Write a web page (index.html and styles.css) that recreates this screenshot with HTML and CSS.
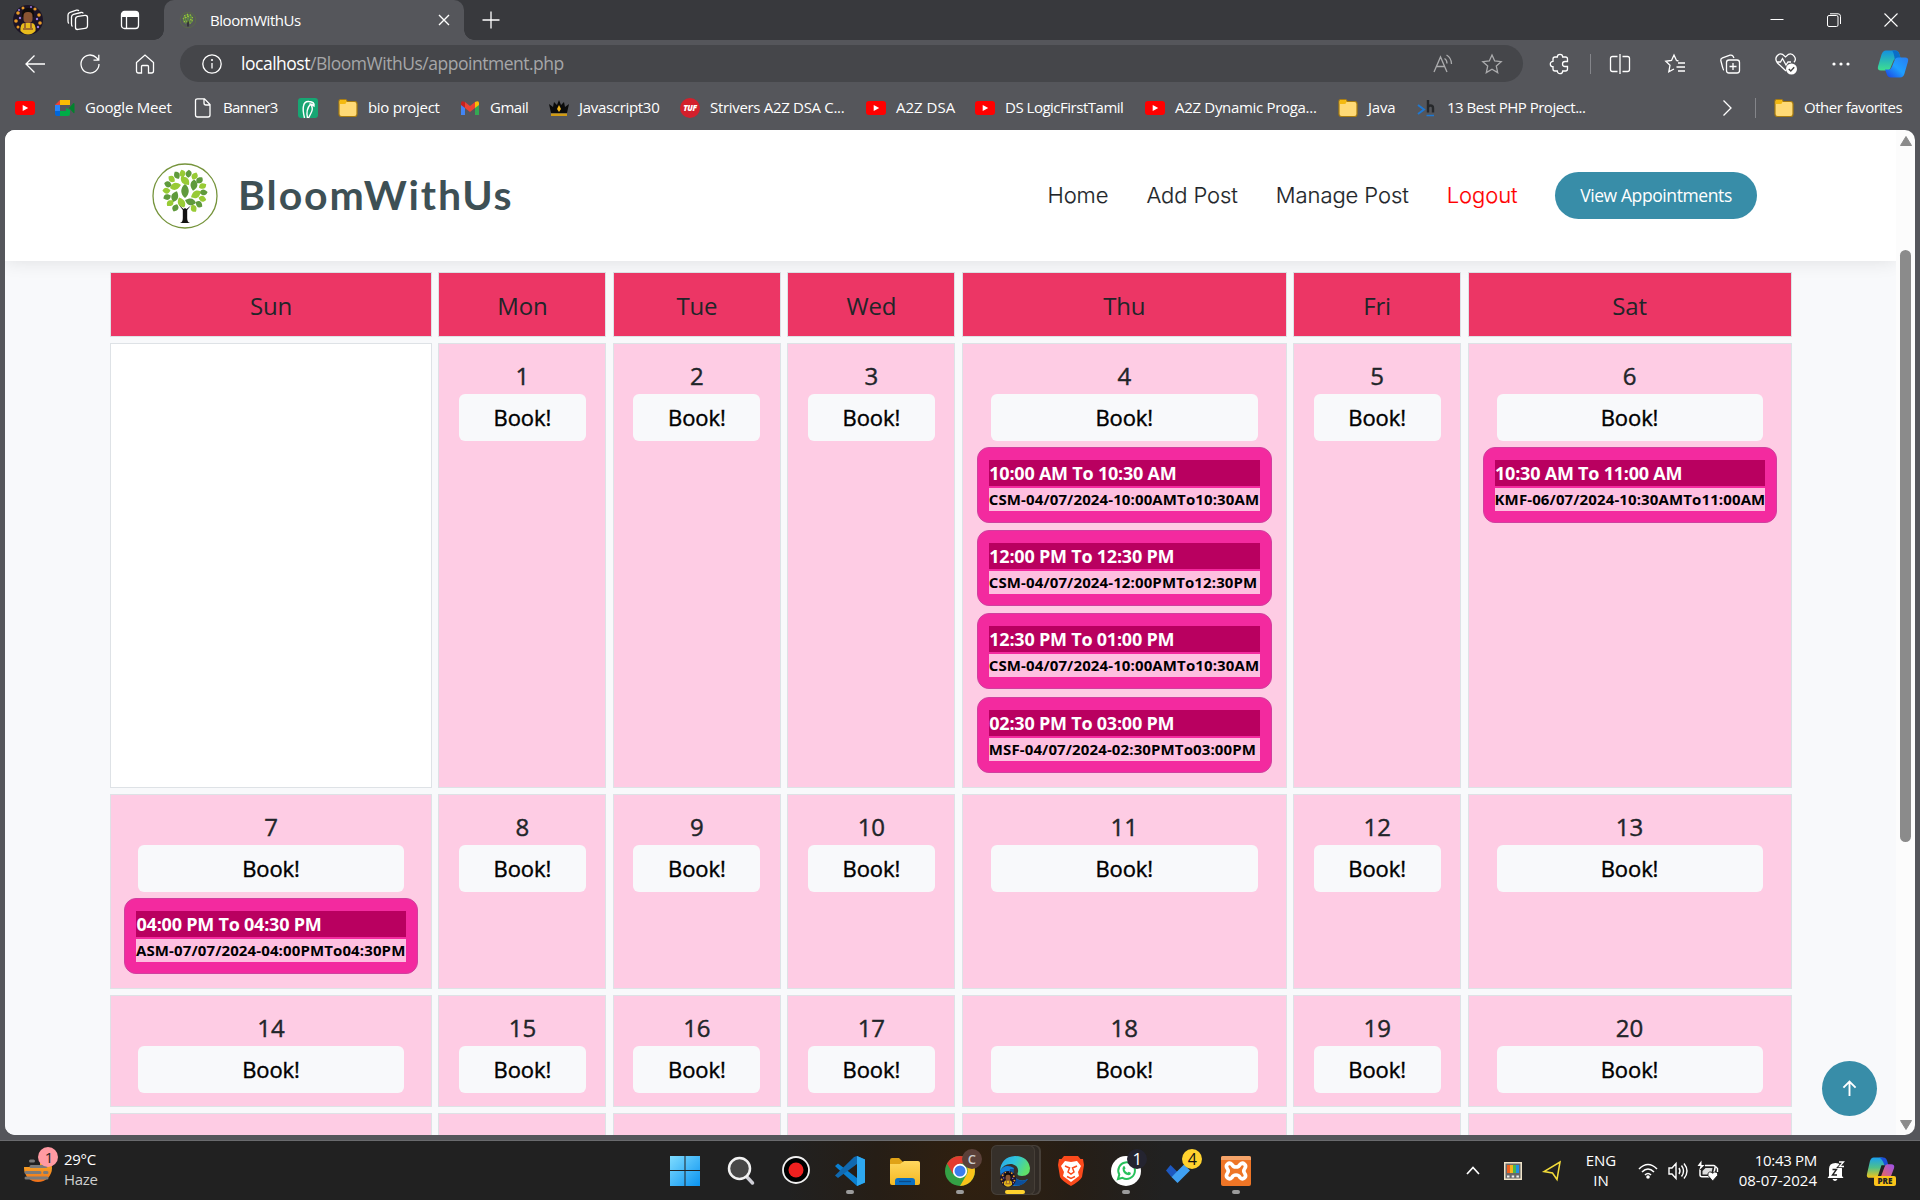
FILE: index.html
```html
<!DOCTYPE html>
<html lang="en">
<head>
<meta charset="utf-8">
<title>BloomWithUs</title>
<link rel="stylesheet" href="styles.css">
</head>
<body>
<svg class="defs" aria-hidden="true">
  <defs>
    <linearGradient id="gBlue" x1="0" y1="0" x2="1" y2="1"><stop offset="0" stop-color="#7fdcff"/><stop offset="1" stop-color="#0a93f0"/></linearGradient>
    <linearGradient id="gFolder" x1="0" y1="0" x2="0" y2="1"><stop offset="0" stop-color="#ffd75e"/><stop offset="1" stop-color="#f5b822"/></linearGradient>
    <linearGradient id="gTeal" x1="0" y1="0" x2="0" y2="1"><stop offset="0" stop-color="#1390e0"/><stop offset="1" stop-color="#3fe08e"/></linearGradient>
    <linearGradient id="gSky" x1="0" y1="1" x2="1" y2="0"><stop offset="0" stop-color="#1b3fe0"/><stop offset=".5" stop-color="#1fa0ff"/><stop offset="1" stop-color="#2a7cf0"/></linearGradient>
    <linearGradient id="gEdge" x1="0" y1="0" x2="1" y2=".4"><stop offset="0" stop-color="#2ba4ea"/><stop offset=".5" stop-color="#2fc4dc"/><stop offset="1" stop-color="#5fe06a"/></linearGradient>
    <linearGradient id="gSun" x1="0" y1="0" x2="0" y2="1"><stop offset="0" stop-color="#fcc42c"/><stop offset="1" stop-color="#f0701a"/></linearGradient>
    <linearGradient id="gPre" x1="0" y1="0" x2="0" y2="1"><stop offset="0" stop-color="#1aa0f0"/><stop offset=".5" stop-color="#4fc08a"/><stop offset="1" stop-color="#f5c518"/></linearGradient>
    <linearGradient id="gPink" x1="0" y1="1" x2="1" y2="0"><stop offset="0" stop-color="#f06a50"/><stop offset="1" stop-color="#9a50f0"/></linearGradient>
    <path id="leafA" d="M33 21c5 4 5 10 0 14c-5-4-5-10 0-14z"/>
    <path id="leafB" d="M29 14c6-1 9 2 8 8c-6 0-9-3-8-8z"/>
    <path id="leafC" d="M35 6.500c4 2 4 5 0 8c-4-2-4-5 0-8z"/>
    <symbol id="tree" viewBox="0 0 66 66">
      <circle cx="33" cy="33" r="32" fill="#fff" stroke="#76943c" stroke-width="1.300"/>
      <g id="crown">
        <g fill="#5f9a3c">
          <use href="#leafA"/><use href="#leafB" transform="rotate(52 33 29)"/><use href="#leafB" transform="rotate(150 33 29)"/><use href="#leafB" transform="rotate(245 33 29)"/>
          <use href="#leafC" transform="rotate(5 33 29)"/><use href="#leafC" transform="rotate(45 33 29)"/><use href="#leafC" transform="rotate(85 33 29)"/><use href="#leafC" transform="rotate(125 33 29)"/><use href="#leafC" transform="rotate(205 33 29)"/><use href="#leafC" transform="rotate(248 33 29)"/><use href="#leafC" transform="rotate(288 33 29)"/><use href="#leafC" transform="rotate(328 33 29)"/>
        </g>
        <g fill="#98cb35">
          <use href="#leafB" transform="rotate(0 33 29)"/><use href="#leafB" transform="rotate(102 33 29)"/><use href="#leafB" transform="rotate(198 33 29)"/><use href="#leafB" transform="rotate(300 33 29)"/>
          <use href="#leafC" transform="rotate(25 33 29)"/><use href="#leafC" transform="rotate(65 33 29)"/><use href="#leafC" transform="rotate(105 33 29)"/><use href="#leafC" transform="rotate(146 33 29)"/><use href="#leafC" transform="rotate(227 33 29)"/><use href="#leafC" transform="rotate(268 33 29)"/><use href="#leafC" transform="rotate(308 33 29)"/><use href="#leafC" transform="rotate(346 33 29)"/>
        </g>
      </g>
      <path d="M27 42l3.800 5v8c0 3-.8 4.500-3 5h10.400c-2.200-.5-3-2-3-5v-8L39 42.500l-4.500 3.500L33 45l-1.500 1z" fill="#111"/>
    </symbol>
    <symbol id="yt" viewBox="0 0 20 20"><rect y="3" width="20" height="14" rx="3" fill="#f00"/><path d="M7.700 7v6l5.500-3z" fill="#fff"/></symbol>
    <symbol id="folder" viewBox="0 0 20 20"><path d="M1 3.500Q1 1.500 3 1.500h4q2 0 2 2h7.500q2.500 0 2.500 2.500V16q0 2.500-2.500 2.500h-13Q1 18.500 1 16z" fill="#ffda76" stroke="#a87c10" stroke-width="1.200"/><path d="M1.600 3.500q0-1.400 1.400-1.400h4q1.400 0 1.400 1.600q0 2.300-2 2.300H1.600z" fill="#f4b90f"/></symbol>
    <symbol id="avatar" viewBox="0 0 30 30">
      <circle cx="15" cy="15" r="15" fill="#1c1426"/>
      <g fill="#e89a28"><circle cx="5" cy="8" r="1.800"/><circle cx="10" cy="3" r="1.500"/><circle cx="22" cy="4" r="1.600"/><circle cx="26" cy="10" r="1.800"/><circle cx="3" cy="16" r="1.800"/><circle cx="27" cy="18" r="1.800"/><circle cx="5" cy="22" r="1.500"/></g>
      <g fill="#9a7be0"><circle cx="7" cy="13" r="1.200"/><circle cx="24" cy="14" r="1.200"/><circle cx="18" cy="2" r="1"/><circle cx="6" cy="5" r="1"/><circle cx="25" cy="22" r="1.200"/></g>
      <path d="M9 9q0-6 6-6t6 6v3H9z" fill="#110d0b"/><rect x="10.500" y="7" width="9" height="11" rx="4" fill="#8a5432"/><path d="M7.500 26q-.5-8 4-8h7q4.500 0 4 8q-3.500 3.500-7.500 3.500t-7.500-3.500z" fill="#e8bc1c"/><path d="M10 24h10M12 18v5M18 18v5" stroke="#8a5432" stroke-width="1.600"/>
    </symbol>
  </defs>
</svg>

<div class="browser">
  <div class="tabstrip">
    <div class="strip-icons">
      <svg class="i30"><use href="#avatar"/></svg>
      <svg class="i22" viewBox="0 0 22 22"><g class="ln"><rect x="8.500" y="7" width="12" height="13" rx="2.500" transform="skewY(-8) translate(0 2)"/><path d="M5.500 17.500Q4.500 17 4.500 15V8q0-2 2-2.700L14 3.500q2-.3 2 1"/><path d="M2 14.500Q1 14 1 12V6q0-2 2-2.700L9.500 1.200q2-.4 2.300.8"/></g></svg>
      <svg class="i20" viewBox="0 0 20 20"><rect x="1.500" y="1.500" width="17" height="17" rx="3" class="ln"/><path d="M1.500 7V4.500q0-3 3-3h11q3 0 3 3V7z" fill="#fff"/><path d="M6.500 7v11" class="ln"/></svg>
    </div>
    <div class="tab">
      <svg class="i16" viewBox="0 0 66 66"><circle cx="33" cy="33" r="32" fill="none" stroke="#5d7a33" stroke-width="2"/><use href="#crown"/><path d="M33 38v22" stroke="#222" stroke-width="5"/></svg>
      <span class="tab-title">BloomWithUs</span>
      <svg class="i12" viewBox="0 0 12 12"><path d="M1 1l10 10M11 1L1 11" stroke="#fff" stroke-width="1.400"/></svg>
    </div>
    <svg class="i18 newtab" viewBox="0 0 18 18"><path d="M9 .5v17M.5 9h17" stroke="#fff" stroke-width="1.300"/></svg>
    <div class="wincontrols">
      <svg class="i14" viewBox="0 0 14 14"><path d="M.5 6.500h13" stroke="#fff"/></svg>
      <svg class="i14" viewBox="0 0 14 14"><rect x=".5" y="2.500" width="10.500" height="11" rx="1.500" class="ln1"/><path d="M3 .8h8q2.500 0 2.500 2.500V11" class="ln1"/></svg>
      <svg class="i14" viewBox="0 0 14 14"><path d="M.5.5l13 13M13.500.5l-13 13" stroke="#fff" stroke-width="1.100"/></svg>
    </div>
  </div>

  <div class="toolbar">
    <div class="nav-icons">
      <svg class="i20" viewBox="0 0 20 20"><path d="M20 10H1M9.500 1.500L1 10l8.500 8.500" class="ln"/></svg>
      <svg class="i20" viewBox="0 0 20 20"><path d="M19 10a9 9 0 1 1-2.500-6.200L18.500 6M18.800.8V6.200H13.500" class="ln"/></svg>
      <svg class="i20" viewBox="0 0 20 20"><path d="M1.500 8.500L10 1l8.500 7.500V17q0 2-2 2h-3v-6.500q0-1-1-1h-5q-1 0-1 1V19h-3q-2 0-2-2z" class="ln"/></svg>
    </div>
    <div class="address">
      <svg class="i20" viewBox="0 0 20 20"><circle cx="10" cy="10" r="9.200" class="ln"/><path d="M10 9v5.500" class="ln"/><circle cx="10" cy="6" r="1.100" fill="#fff"/></svg>
      <span class="url"><b>localhost</b>/BloomWithUs/appointment.php</span>
      <svg class="i20 dim" viewBox="0 0 20 20"><path d="M1 18L7.500 3L14 18M3.500 12.500h8M11.500 4.500q2.500 1.500 2.500 5M13.500 1q5 3 5 9" class="ln"/></svg>
      <svg class="i20 dim" viewBox="0 0 20 20"><path d="M10 1l2.700 6 6.500.7-4.900 4.400 1.400 6.500L10 15.300 4.300 18.600l1.400-6.500L.8 7.700 7.300 7z" class="ln"/></svg>
    </div>
    <div class="ext-icons">
      <svg class="i20" viewBox="0 0 20 20"><path d="M5 3H7.300a2.700 2.700 0 0 1 5.400 0H15.500q2 0 2 2V7.500H15a2.500 2.500 0 0 0 0 5h2.500V15q0 2-2 2H12.700a2.700 2.700 0 0 1-5.400 0H5q-2 0-2-2V12.700a2.700 2.700 0 0 1 0-5.400V5q0-2 2-2z" class="ln"/></svg>
      <i class="vline"></i>
      <svg class="i20" viewBox="0 0 20 20"><path d="M10 0v20M7.500 2.500h-5q-2 0-2 2v11q0 2 2 2h5M12.500 2.500h5q2 0 2 2v11q0 2-2 2h-5" class="ln"/></svg>
      <svg class="i20" viewBox="0 0 20 20"><path d="M11.500 6.500L9 1 6.500 6.500.8 7.300l4.200 4-1.200 6.500L9 15M13 9h7M11.500 13h8.500M13 17h7M11.500 6.500l2 .3" class="ln"/></svg>
      <svg class="i20" viewBox="0 0 20 20"><path d="M4 16Q3.300 16 2.500 13L.8 6.500Q.5 4.500 2.500 3.800L10 1.200q2-.4 3 1L14 4" class="ln"/><rect x="6.500" y="6" width="13" height="13" rx="2.500" class="ln"/><path d="M13 9v7M9.500 12.500h7" class="ln"/></svg>
      <svg class="i22" viewBox="0 0 22 22"><path d="M11 18L2.500 10Q-.5 6 2 3t5.500-1.700L10.500 4l3-2.700Q17 0 19.300 3.300t-.3 6M1.500 9h4l2-3.500L11 12l2-3h3" class="ln"/><circle cx="16.500" cy="16" r="5.500" fill="#fff"/><path d="M13.800 16l2 2 3.400-3.800" stroke="#444" stroke-width="1.400" fill="none"/></svg>
      <svg class="i20" viewBox="0 0 20 20"><g fill="#fff"><circle cx="3" cy="10" r="1.600"/><circle cx="10" cy="10" r="1.600"/><circle cx="17" cy="10" r="1.600"/></g></svg>
      <svg class="i30" viewBox="0 0 30 27"><path d="M8 0h9q3.500 0 4.500 4l1.500 5H16L13 16q-1 4-4 4H3q-4 0-3-4L3.500 4Q5 0 8 0z" fill="url(#gTeal)"/><path d="M14 0h3q3.500 0 4.500 4l1.300 4h-3.500q-2 0-2.500 1.500Q16 2 14 0z" fill="#0a6ec8"/><path d="M22 27h-9q-3.500 0-4.500-4L7 19h4q2 0 3-3l2.500-6Q17.500 7 20 7h7q4 0 3 4l-3.500 12Q25.500 27 22 27z" fill="url(#gSky)"/></svg>
    </div>
  </div>

  <div class="bookmarks">
    <div class="bm"><svg class="i20"><use href="#yt"/></svg></div>
    <div class="bm t1"><svg class="i20" viewBox="0 0 20 20"><path d="M5 2h10v5H5z" fill="#fbbc04"/><path d="M5 2v5H0z" fill="#ea4335"/><path d="M0 7h5v6H0z" fill="#2684fc"/><path d="M0 13h5v5H2q-2 0-2-2z" fill="#0066da"/><path d="M5 13h6v-3l4 2v4q0 2-2 2H5z" fill="#00ac47"/><path d="M14 10l4.500-5q1 0 1 1v8.500q0 1-1 .5z" fill="#00832d"/></svg><span>Google Meet</span></div>
    <div class="bm t4"><svg class="i20" viewBox="0 0 20 20"><path d="M4.500.8h7L17 6.500V17q0 2-2 2H4.500q-2 0-2-2V2.800q0-2 2-2zM11 1v4q0 2 2 2h4" class="ln"/></svg><span>Banner3</span></div>
    <div class="bm"><svg class="i20" viewBox="0 0 20 20"><rect width="20" height="20" rx="3" fill="#17a673"/><path d="M6.500 20Q4.500 12 5.500 8Q6.500 3 11 3.500q6 .5 5 4.500q-2-2-3.500-2q3 4 1 8t-3 6M9.500 20q-2-8 3-14" fill="none" stroke="#fff" stroke-width="1.400"/></svg></div>
    <div class="bm t2"><svg class="i20"><use href="#folder"/></svg><span>bio project</span></div>
    <div class="bm t3"><svg class="i20" viewBox="0 0 20 20"><path d="M1 5v12h4V8z" fill="#4285f4"/><path d="M19 5v12h-4V8z" fill="#34a853"/><path d="M5 4v6l5 4 5-4V4l-5 4z" fill="#ea4335"/><path d="M1 5q0-3 4-1v6L1 7z" fill="#c5221f"/><path d="M19 5q0-3-4-1v6l4-3z" fill="#fbbc04"/></svg><span>Gmail</span></div>
    <div class="bm t2"><svg class="i20" viewBox="0 0 20 20"><path d="M2 15L0 6l4 3 1-5 3 3 2-5 2 5 3-3 1 5 4-3-2 9z" fill="#0b0b0b"/><path d="M2 15.500h16V18H2z" fill="#d19b12"/><path d="M10 7l2 4-2 3-2-3z" fill="#eeb31c"/></svg><span>Javascript30</span></div>
    <div class="bm t2"><span class="tuf">TUF</span><span>Strivers A2Z DSA C...</span></div>
    <div class="bm"><svg class="i20"><use href="#yt"/></svg><span>A2Z DSA</span></div>
    <div class="bm t3"><svg class="i20"><use href="#yt"/></svg><span>DS LogicFirstTamil</span></div>
    <div class="bm t2"><svg class="i20"><use href="#yt"/></svg><span>A2Z Dynamic Proga...</span></div>
    <div class="bm t1"><svg class="i20"><use href="#folder"/></svg><span>Java</span></div>
    <div class="bm t3"><svg class="i20" viewBox="0 0 20 20"><path d="M1 7l6 4.500L1 16" fill="none" stroke="#1e78d2" stroke-width="2"/><path d="M11 2v12.500M11 10q0-2.500 2.500-2.500T16 10v4.500" fill="none" stroke="#26282b" stroke-width="2.400"/><path d="M9.500 17.500H17" stroke="#1e78d2" stroke-width="1.500"/></svg><span>13 Best PHP Project...</span></div>
    <div class="bm"><svg class="i20" viewBox="0 0 20 20"><path d="M1.500 2.500L9 10l-7.500 7.500" class="ln"/></svg></div>
    <i class="vline"></i>
    <div class="bm t3"><svg class="i20"><use href="#folder"/></svg><span>Other favorites</span></div>
  </div>

  <div class="viewport">
    <div class="page">
      <header class="site-header">
        <div class="brand"><svg class="logo"><use href="#tree"/></svg><span class="brand-name">BloomWithUs</span></div>
        <nav class="site-nav">
          <a>Home</a><a>Add Post</a><a>Manage Post</a><a class="logout">Logout</a>
          <a class="cta">View Appointments</a>
        </nav>
      </header>
      <main class="calendar">
        <div class="head">Sun</div><div class="head">Mon</div><div class="head">Tue</div><div class="head">Wed</div><div class="head">Thu</div><div class="head">Fri</div><div class="head">Sat</div>

        <div class="day empty"></div>
        <div class="day"><h4>1</h4><a class="book">Book!</a></div>
        <div class="day"><h4>2</h4><a class="book">Book!</a></div>
        <div class="day"><h4>3</h4><a class="book">Book!</a></div>
        <div class="day wide"><h4>4</h4><a class="book">Book!</a>
          <div class="slot"><p class="time">10:00 AM To 10:30 AM</p><p class="ref">CSM-04/07/2024-10:00AMTo10:30AM</p></div>
          <div class="slot"><p class="time">12:00 PM To 12:30 PM</p><p class="ref">CSM-04/07/2024-12:00PMTo12:30PM</p></div>
          <div class="slot"><p class="time">12:30 PM To 01:00 PM</p><p class="ref">CSM-04/07/2024-10:00AMTo10:30AM</p></div>
          <div class="slot"><p class="time">02:30 PM To 03:00 PM</p><p class="ref">MSF-04/07/2024-02:30PMTo03:00PM</p></div>
        </div>
        <div class="day"><h4>5</h4><a class="book">Book!</a></div>
        <div class="day wide"><h4>6</h4><a class="book">Book!</a>
          <div class="slot"><p class="time">10:30 AM To 11:00 AM</p><p class="ref">KMF-06/07/2024-10:30AMTo11:00AM</p></div>
        </div>

        <div class="day wide first"><h4>7</h4><a class="book">Book!</a>
          <div class="slot"><p class="time">04:00 PM To 04:30 PM</p><p class="ref">ASM-07/07/2024-04:00PMTo04:30PM</p></div>
        </div>
        <div class="day"><h4>8</h4><a class="book">Book!</a></div>
        <div class="day"><h4>9</h4><a class="book">Book!</a></div>
        <div class="day"><h4>10</h4><a class="book">Book!</a></div>
        <div class="day wide"><h4>11</h4><a class="book">Book!</a></div>
        <div class="day"><h4>12</h4><a class="book">Book!</a></div>
        <div class="day wide"><h4>13</h4><a class="book">Book!</a></div>

        <div class="day wide first"><h4>14</h4><a class="book">Book!</a></div>
        <div class="day"><h4>15</h4><a class="book">Book!</a></div>
        <div class="day"><h4>16</h4><a class="book">Book!</a></div>
        <div class="day"><h4>17</h4><a class="book">Book!</a></div>
        <div class="day wide"><h4>18</h4><a class="book">Book!</a></div>
        <div class="day"><h4>19</h4><a class="book">Book!</a></div>
        <div class="day wide"><h4>20</h4><a class="book">Book!</a></div>

        <div class="day"></div><div class="day"></div><div class="day"></div><div class="day"></div><div class="day"></div><div class="day"></div><div class="day"></div>
      </main>
      <a class="to-top"><svg viewBox="0 0 16 18"><path d="M8 17V2M1.500 8L8 1.500 14.500 8" fill="none" stroke="#fff" stroke-width="2"/></svg></a>
    </div>
    <div class="scrollbar">
      <svg viewBox="0 0 12 10"><path d="M6 .5L11.500 9.500H.5z" fill="#8b8b8b" stroke="#8b8b8b" stroke-linejoin="round"/></svg>
      <i class="thumb"></i>
      <svg viewBox="0 0 12 10"><path d="M6 9.500L11.500.5H.5z" fill="#8b8b8b" stroke="#8b8b8b" stroke-linejoin="round"/></svg>
    </div>
  </div>
</div>

<div class="taskbar">
  <div class="weather">
    <svg viewBox="0 0 34 36"><circle cx="14" cy="21" r="14" fill="url(#gSun)"/><path d="M0 4h28v12H16v4H0z" fill="#212121"/><path d="M6.500 14h3M7 19.500h15M2 25.500h14M20.500 25.500h2.500M2 31h21" stroke="#7b7b7b" stroke-width="3" stroke-linecap="round"/><circle cx="24" cy="10" r="10" fill="#ff9aa2"/></svg>
    <span class="wbadge">1</span>
    <div class="two"><span>29°C</span><span class="soft">Haze</span></div>
  </div>
  <div class="apps">
    <div class="app"><svg viewBox="0 0 30 30"><path d="M0 0h14.500v14H0zM15.500 0H30v14H15.500zM0 15h14.500v15H0zM15.500 15H30v15H15.500z" fill="url(#gBlue)"/></svg></div>
    <div class="app"><svg viewBox="0 0 30 30"><path d="M21 20l6.500 7" stroke="#cfcfd6" stroke-width="3.500" stroke-linecap="round"/><circle cx="14.500" cy="12.500" r="10.500" fill="#484848" stroke="#f2f2f2" stroke-width="2.500"/></svg></div>
    <div class="app"><svg viewBox="0 0 30 30"><circle cx="16" cy="14" r="13" fill="#000" stroke="#f0f0f0" stroke-width="1.800"/><circle cx="16" cy="14" r="7.500" fill="#f0201f"/></svg></div>
    <div class="app open"><svg viewBox="0 0 30 30"><path d="M22 0l8 3.500v23L22 30 2 12 0 10l3-2.500L22 22z" fill="#0a7fd0"/><path d="M22 0v8L3 22l-3-2.500L19 1z" fill="#1069b0"/><path d="M22 0l8 3.500v23L22 30z" fill="#2ea8f0"/></svg></div>
    <div class="app"><svg viewBox="0 0 30 30"><path d="M0 4q0-2 2-2h7l4 4h15q2 0 2 2v5H0z" fill="#e0a216"/><path d="M0 8h10l4-3h14q2 0 2 2v20q0 2-2 2H2q-2 0-2-2z" fill="url(#gFolder)"/><path d="M5 29v-4q0-3 3-3h14q3 0 3 3v4z" fill="#0a6fc2"/><path d="M9 25.500h12" stroke="#0a4a88" stroke-width="1.300"/></svg></div>
    <div class="app open"><svg viewBox="0 0 30 30"><circle cx="15" cy="15" r="15" fill="#34a045"/><path d="M2 7.500A15 15 0 0 1 28 7.500H15L8 18z" fill="#e33b2e"/><path d="M28.200 8A15 15 0 0 1 15 30l7-12q2-5-2-10z" fill="#fbc31a"/><circle cx="15" cy="15" r="7.200" fill="#fff"/><circle cx="15" cy="15" r="5.500" fill="#3b7ded"/></svg><span class="badge c">C</span></div>
    <div class="app open active"><svg viewBox="0 0 30 30"><path d="M0 15Q5 7 14 12q-4 8 4 11.500 5 2 10-.5Q23 30 15 30 1 29 0 15z" fill="#1480d8"/><path d="M10 13q-3 9 5 16.500 8 1 13-6.500-5 3-9.500 1-6-3-4.500-11z" fill="#0c4f9c"/><path d="M0 15Q1 1 15 0q13 0 15 12 0 8-8 8-6 0-4-4 1-6-6-8Q4 7 0 15z" fill="url(#gEdge)"/></svg><svg class="mini"><use href="#avatar" width="16" height="16"/></svg></div>
    <div class="app"><svg viewBox="0 0 30 30"><path d="M8 0h14l2.500 3h2.500l1 6-2 12Q24 25 15 30 6 25 4 21L2 9l1-6h2.500z" fill="#fb4a1c"/><path d="M9 5l6 1 6-1 4 5-3 6 1 4-8 6-8-6 1-4-3-6z" fill="#fff"/><path d="M9 10l4.500 2-1.500 4 3 2 3-2-1.500-4L21 10M11 20.500l4 2 4-2" fill="none" stroke="#fb4a1c" stroke-width="1.500"/></svg></div>
    <div class="app open"><svg viewBox="0 0 30 30"><circle cx="15" cy="15" r="15" fill="#fff"/><path d="M7 23l1.300-4.500A8.300 8.300 0 1 1 11.500 21.800z" fill="none" stroke="#27c15b" stroke-width="2"/><path d="M12 11q1-2 2 0l.5 1.500-1 1.200q1 2 3 3l1.200-1 2 1q.6 2-2.200 2.500-6-1-6-7z" fill="#27c15b"/></svg><span class="badge w">1</span></div>
    <div class="app"><svg viewBox="0 0 30 30"><path d="M4.500 9l7 7L5.500 21 0 14.500z" fill="#1d58c0"/><path d="M5.500 21L18 8.500l6 6L11.500 27z" fill="#3fa0f2"/></svg><span class="badge y">4</span></div>
    <div class="app open"><svg viewBox="0 0 30 30"><rect width="30" height="30" rx="2" fill="#ee7526"/><path d="M0 2q0-2 2-2h26q2 0 2 2v2H0z" fill="#f5a46a"/><path d="M11 8.500C8 5.500 3.500 9 6.500 13Q8 15 6.500 17C3.500 21 8 24.500 11 21.500Q12 19 15 19T19 21.500C22 24.500 26.500 21 23.500 17Q22 15 23.500 13C26.500 9 22 5.500 19 8.500Q18 11 15 11T11 8.500z" fill="none" stroke="#fff" stroke-width="3.600" stroke-linejoin="round"/></svg></div>
  </div>
  <div class="tray">
    <svg class="t-chev" viewBox="0 0 14 9"><path d="M1 8l6-6.500L13 8" fill="none" stroke="#fff" stroke-width="1.700"/></svg>
    <svg class="t-app" viewBox="0 0 18 18"><rect width="18" height="18" fill="#efe3c8"/><rect x="1.500" y="1.500" width="15" height="15" fill="#686868"/><path d="M3 3h3v8H3z" fill="#f0601c"/><path d="M6 3h3v8H6z" fill="#f8b41a"/><path d="M9 3h3v8H9z" fill="#4db848"/><path d="M12 3h3v8h-3z" fill="#2090e8"/><path d="M3 14.500h2.500M7.700 14.500h2.500M12.400 14.500h2.500" stroke="#eee" stroke-width="2"/></svg>
    <svg class="t-loc" viewBox="0 0 18 20"><path d="M17 1L14 18.500 9.500 12 1 10.500z" fill="none" stroke="#f3dc3a" stroke-width="1.500"/></svg>
    <div class="two lang"><span>ENG</span><span>IN</span></div>
    <svg class="t-wifi" viewBox="0 0 20 16"><path d="M1 6q9-9 18 0M4 9q6-6 12 0M7 12q3-3 6 0" fill="none" stroke="#fff" stroke-width="1.600"/><circle cx="10" cy="14" r="1.800" fill="#fff"/></svg>
    <svg class="t-vol" viewBox="0 0 20 18"><path d="M1 6h3l4-4.500v15L4 12H1zM11 6q2 3 0 6M13.500 3.500q4 5.500 0 11M16 1.500q6 7.500 0 15" fill="none" stroke="#fff" stroke-width="1.400"/></svg>
    <svg class="t-bat" viewBox="0 0 22 20"><path d="M8 4.500h8.500q2 0 1.600 2L16.500 14q-.5 1.800-2.500 1.800H5q-2 0-2-2V9" fill="none" stroke="#fff" stroke-width="1.500"/><path d="M8.500 7h7L14 13.500H5.500V10z" fill="#ddd"/><path d="M4.500-.5L.5 5h3L2 9.500 7.500 4h-3z" fill="#fff"/><path d="M11 14.500q-.5-4 3-3.500l1.700 1.200L17.500 11q4 0 3 3.500L15.700 20z" fill="#fff" stroke="#212121" stroke-width=".9"/><path d="M18.500 5.500l2 2V11" stroke="#fff" fill="none" stroke-width="1.400"/></svg>
    <div class="two clock"><span>10:43 PM</span><span class="date">08-07-2024</span></div>
    <svg class="t-bell" viewBox="0 0 18 20"><path d="M2 15V8q0-6 6.500-6T15 8v7l1.500 2H.5zM5.500 18h5q-1 2-2.500 2t-2.500-2z" fill="#fff"/><path d="M5.500 8.500h4L5.500 14H10" fill="none" stroke="#222" stroke-width="1.400"/><path d="M12 1h4.500l-4 4.500h4.500" fill="none" stroke="#222" stroke-width="3"/><path d="M12 1h4.500l-4 4.500h4.500" fill="none" stroke="#fff" stroke-width="1.300"/></svg>
    <div class="copilot"><svg viewBox="0 0 30 28"><path d="M7 0h8q3 0 4 4l1 4h-5l-3 9q-1 4-4 4H3q-4 0-3-4L3 4Q4 0 7 0z" fill="url(#gPre)"/><path d="M12 0h5q3 0 4 4l1 4h-4q-2-7-6-8z" fill="#1c50d8"/><path d="M21 21h-7l4-11q1-3 3-3h4q4 0 3 4l-3 8q-1 2-4 2z" fill="url(#gPink)"/></svg><span>PRE</span></div>
  </div>
</div>
</body>
</html>
```
FILE: styles.css
```css
* { box-sizing: border-box; }
body { margin: 0; width: 1920px; height: 1200px; overflow: hidden; display: flex; flex-direction: column; font-family: "Open Sans", "Noto Sans", sans-serif; background: #212121; }
svg { display: block; flex: none; overflow: visible; }
h4, p { margin: 0; }
.defs { position: absolute; width: 0; height: 0; }
.ln { fill: none; stroke: #fff; stroke-width: 1.3; }
.ln1 { fill: none; stroke: #fff; stroke-width: 1; }
.i12 { width: 12px; height: 12px; }
.i14 { width: 14px; height: 14px; }
.i16 { width: 16px; height: 16px; }
.i18 { width: 18px; height: 18px; }
.i20 { width: 20px; height: 20px; }
.i22 { width: 22px; height: 22px; }
.i30 { width: 30px; height: 30px; }
.dim { opacity: .55; }
.vline { width: 1px; height: 20px; background: #84858a; }

/* Browser chrome */
.browser { height: 1141px; background: #55565b; display: flex; flex-direction: column; border-bottom: 1px solid #6a6b6e; color: #fff; }
.tabstrip { height: 40px; background: #38393d; display: flex; align-items: center; flex: none; }
.strip-icons { width: 164px; height: 40px; display: flex; align-items: center; gap: 24px; padding-left: 13px; }
.strip-icons svg:last-child { margin-left: 7px; }
.tab { position: relative; width: 300px; height: 40px; background: #55565b; border-radius: 10px 10px 0 0; display: flex; align-items: center; padding: 0 14px 0 16px; font-size: 15px; }
.tab::before, .tab::after { content: ""; position: absolute; bottom: 0; width: 10px; height: 10px; }
.tab::before { left: -10px; background: radial-gradient(circle at 0 0, transparent 9.5px, #55565b 10px); }
.tab::after { right: -10px; background: radial-gradient(circle at 100% 0, transparent 9.5px, #55565b 10px); }
.tab-title { margin: 0 auto 1px 14px; letter-spacing: -.45px; }
.newtab { margin-left: 18px; }
.wincontrols { margin-left: auto; display: flex; gap: 43px; padding-right: 22px; }
.toolbar { height: 47px; display: flex; align-items: center; flex: none; }
.nav-icons { width: 180px; display: flex; gap: 35px; padding-left: 25px; }
.address { width: 1343px; height: 37px; border-radius: 19px; background: #45464a; display: flex; align-items: center; padding: 0 21px 0 22px; gap: 20px; font-size: 17.500px; color: #a6a6a8; }
.url { margin: 0 auto 1px -1px; letter-spacing: -.48px; }
.url b { font-weight: 400; color: #fff; }
.address svg:last-child { margin-left: 9px; }
.ext-icons { display: flex; align-items: center; padding-left: 27px; gap: 35px; }
.ext-icons .vline { margin: 0 -16px 0 -15px; }
.ext-icons .i22 { margin-right: -1px; }
.ext-icons .i30 { margin-left: -8px; }
.bookmarks { height: 43px; display: grid; align-items: center; flex: none; padding: 0 0 1px 15px; font-size: 15px; grid-template-columns: 40px 138px 105px 40px 122px 89px 131px 186px 109px 170px 193px 79px 305px 33px 19px 146px; }
.bm { display: flex; align-items: center; gap: 10px; white-space: nowrap; }
.bm > span { margin-bottom: 2px; }
.bm > .tuf { width: 20px; height: 20px; margin: 0; border-radius: 50%; background: #d3202c; font: italic 800 8px/20px "Open Sans", sans-serif; text-align: center; }
.t1 { letter-spacing: -.2px; }
.t2 { letter-spacing: -.31px; }
.t3 { letter-spacing: -.49px; }
.t4 { letter-spacing: -.7px; }

/* Web page */
.viewport { height: 1005px; width: 1910px; margin-left: 5px; border-radius: 10px; overflow: hidden; background: #fcfcfc; display: flex; flex: none; }
.page { position: relative; width: 1891px; height: 1005px; background: #f8f9fb; overflow: hidden; color: #212529; }
.site-header { position: relative; height: 131px; background: #fff; box-shadow: 0 0 18px rgba(0,0,0,.11); display: flex; align-items: center; justify-content: space-between; padding: 0 139px 0 147px; }
.brand { display: flex; align-items: center; gap: 20px; }
.logo { width: 66px; height: 66px; }
.brand-name { font: 700 41px/50px Lato, sans-serif; color: #3e5055; letter-spacing: 1.900px; margin-bottom: 2px; }
.site-nav { display: flex; align-items: center; font: 300 22px/30px Inter, sans-serif; color: #212529; gap: 38px; }
.site-nav a { letter-spacing: -.08px; margin-bottom: 1px; -webkit-text-stroke: .15px; }
.site-nav .logout { color: #f00; margin-right: -.5px; }
.site-nav .cta { width: 202px; height: 47px; margin: 0; border-radius: 24px; background: #388da8; color: #fff; font: 400 17.500px/47px "Open Sans", sans-serif; letter-spacing: -.4px; text-align: center; -webkit-text-stroke: 0; }
.calendar { display: grid; grid-template-columns: 322px 168.200px 168.200px 168.200px 325px 168.200px 324px; grid-template-rows: 65px 445px 195px 112px 112px; column-gap: 6.300px; row-gap: 6px; padding: 11px 0 0 105px; }
.head, .day { border: 1px solid #dee2e6; text-align: center; }
.head { background: #ec3665; font-size: 24px; line-height: 66px; letter-spacing: -.2px; }
.day { background: #fecce4; padding: 15px 19.500px 0; }
.day.wide { padding: 15px 14px 0; }
.day.wide.first { padding: 15px 13px 0; }
.day.empty { background: #fff; }
.day h4 { font-size: 24px; line-height: 33px; height: 35px; font-weight: 500; -webkit-text-stroke: .4px #212529; }
.book { display: block; height: 47px; border-radius: 6px; background: #f8f9fb; color: #000; font-size: 22px; line-height: 47px; font-weight: 500; letter-spacing: -.1px; -webkit-text-stroke: .4px #000; }
.wide .book { margin: 0 14px; }
.slot { height: 76px; margin-top: 6px; border: 1px solid #d0409f; border-radius: 12px; background: #f32a9f; padding: 12px 11px; text-align: left; white-space: nowrap; }
.slot + .slot { margin-top: 7.200px; }
.time { height: 26px; background: #b90060; color: #fff; font-size: 18px; line-height: 27px; font-weight: 700; letter-spacing: -.22px; padding-left: .5px; }
.ref { height: 23px; margin-top: 2px; background: #febfe0; color: #000; font-size: 15px; line-height: 23px; font-weight: 700; letter-spacing: .12px; }
.to-top { position: absolute; left: 1817px; top: 931px; width: 55px; height: 55px; border-radius: 50%; background: #388da8; display: grid; place-items: center; }
.to-top svg { width: 15px; height: 17px; }
.scrollbar { width: 19px; display: flex; flex-direction: column; align-items: center; padding: 6px 0 5px; }
.scrollbar svg { width: 12px; height: 10px; }
.thumb { width: 11px; height: 592px; margin: 104px 0 auto; border-radius: 6px; background: #8b8b8b; }

/* Taskbar */
.taskbar { height: 59px; background: radial-gradient(circle at 975px 30px, #31200f 0, #261e16 100px, #212121 190px); display: flex; color: #fff; font-size: 15px; }
.weather { position: relative; width: 657px; display: flex; padding: 6px 0 0 24px; gap: 6px; }
.weather svg { width: 34px; height: 36px; }
.wbadge { position: absolute; left: 39px; top: 6px; width: 20px; line-height: 20px; text-align: center; color: #222; }
.two { display: flex; flex-direction: column; line-height: 20px; margin-bottom: 2px; letter-spacing: -.3px; }
.weather .two { padding-top: 2px; }
.soft { color: #cfcfcf; }
.apps { width: 809px; display: flex; }
.app { position: relative; width: 55.150px; height: 50px; margin-top: 4px; display: flex; justify-content: center; padding-top: 11px; }
.app svg { width: 30px; height: 30px; }
.app.open::after { content: ""; position: absolute; bottom: 1px; width: 8px; height: 4px; border-radius: 2px; background: #9b9b9b; }
.app.active::before { content: ""; position: absolute; left: 3px; top: 0; width: 44px; height: 50px; border-radius: 6px; background: #36302a; box-shadow: inset 0 0 0 1px #463f38, 5px 0 0 -1px #302a25, 6px 0 0 0 #463f38; }
.app.active svg { position: relative; top: 0; }
.app.active::after { width: 20px; background: #ffd22e; }
.app.active .mini { position: absolute; left: 12px; top: 26px; width: 16px; height: 16px; }
.badge { position: absolute; right: 6px; top: 4px; width: 20px; height: 20px; border-radius: 50%; line-height: 20px; text-align: center; }
.badge.c { background: #5b4039; color: #ccc; font-size: 13px; font-weight: 600; }
.badge.w { background: #242430; font-size: 17px; }
.badge.y { background: #ffd22e; color: #111; font-size: 16px; }
.tray { display: flex; align-items: center; width: 454px; }
.t-chev { width: 14px; height: 9px; }
.t-app { width: 18px; height: 18px; margin-left: 24px; }
.t-loc { width: 18px; height: 20px; margin-left: 21px; }
.lang { width: 40px; margin-left: 20px; text-align: center; letter-spacing: 0; }
.t-wifi { width: 20px; height: 16px; margin-left: 17px; }
.t-vol { width: 20px; height: 18px; margin-left: 10px; }
.t-bat { width: 22px; height: 20px; margin-left: 9px; }
.clock { width: 98px; text-align: right; }
.date { letter-spacing: 0; }
.t-bell { width: 18px; height: 20px; margin-left: 10px; }
.copilot { position: relative; margin-left: 22px; }
.copilot svg { width: 29px; height: 28px; }
.copilot span { position: absolute; left: 7px; top: 19px; width: 22px; height: 10px; border-radius: 2px; background: #fbc41a; color: #222; font: 800 8px/10px "Open Sans", sans-serif; text-align: center; }
```
